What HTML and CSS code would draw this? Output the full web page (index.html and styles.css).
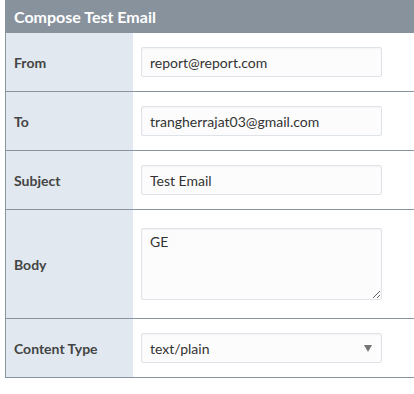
FILE: index.html
```html
<!DOCTYPE html>
<html lang="en">
<head>
    <meta charset="UTF-8">
    <meta name="viewport" content="width=device-width, initial-scale=1.0">
    <title>Compose Test Email</title>
    <link rel="stylesheet" href="styles.css">
</head>
<body>
    <div class="panel">
        <div class="panel-title">Compose Test Email</div>

        <!-- Email fields -->
        <div class="form-row">
            <label class="form-label" for="from">From</label>
            <div class="form-field">
                <input type="text" id="from" value="report@report.com">
            </div>
        </div>
        <div class="form-row">
            <label class="form-label" for="to">To</label>
            <div class="form-field">
                <input type="text" id="to" value="trangherrajat03@gmail.com">
            </div>
        </div>
        <div class="form-row">
            <label class="form-label" for="subject">Subject</label>
            <div class="form-field">
                <input type="text" id="subject" value="Test Email">
            </div>
        </div>
        <div class="form-row">
            <label class="form-label" for="body">Body</label>
            <div class="form-field">
                <textarea id="body">GE</textarea>
            </div>
        </div>
        <div class="form-row">
            <label class="form-label" for="contentType">Content Type</label>
            <div class="form-field">
                <div class="select-wrap">
                    <select id="contentType">
                        <option>text/plain</option>
                        <option>text/html</option>
                    </select>
                </div>
            </div>
        </div>
    </div>
</body>
</html>
```

FILE: styles.css
```css
/* Global Styles */
body {
    font-family: Lato, 'Noto Sans', sans-serif;
    background-color: #fff;
    color: #333;
    margin: 0;
    padding: 0 0 0 5px;
    overflow: hidden;
}

.panel {
    border-left: 1px solid #8a949e;
}

.panel-title {
    background-color: #88929d;
    color: #fff;
    font-weight: bold;
    font-size: 16px;
    height: 33px;
    line-height: 33px;
    padding-left: 9px;
    margin-left: -1px;
}

/* Rows */
.form-row {
    display: grid;
    grid-template-columns: 127px 1fr;
    border-bottom: 1px solid #8a949e;
}

.form-label {
    background-color: #e1e8ef;
    color: #444;
    font-weight: bold;
    font-size: 14px;
    padding-left: 8px;
    display: flex;
    align-items: center;
}

.form-field {
    padding: 14px 8px;
    display: flex;
    align-items: center;
}

.form-row:first-of-type .form-field {
    padding-top: 15px;
}

/* Inputs */
input,
textarea,
select {
    font-family: inherit;
    font-size: 14px;
    color: #333;
    width: 241px;
    box-sizing: border-box;
    border: 1px solid #dde3e9;
    border-radius: 2px;
    background-color: #fcfcfc;
    box-shadow: inset 0 1px 2px rgba(0, 0, 0, 0.04);
    outline: none;
    margin: 0;
}

input {
    height: 30px;
    padding: 0 8px;
}

textarea {
    height: 72px;
    padding: 4px 8px;
    margin: 4px 0;
    resize: vertical;
    display: block;
}

.select-wrap {
    position: relative;
}

select {
    height: 30px;
    padding: 0 8px;
    appearance: none;
    -webkit-appearance: none;
}

.select-wrap::after {
    content: '';
    position: absolute;
    right: 10px;
    top: 12px;
    border-left: 4px solid transparent;
    border-right: 4px solid transparent;
    border-top: 7px solid #777;
    pointer-events: none;
}
```
